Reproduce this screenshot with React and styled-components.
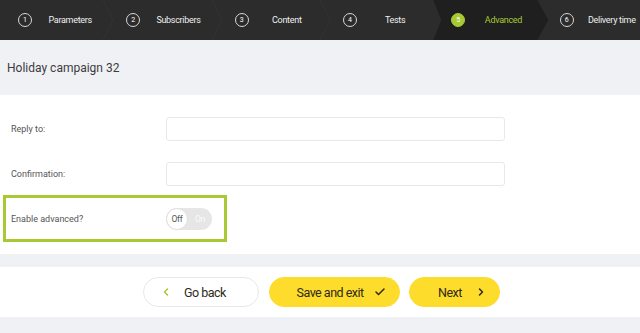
import styled, { createGlobalStyle } from 'styled-components';
import { ChevronLeft, ChevronRight, Check } from 'lucide-react';

const GlobalStyle = createGlobalStyle`
  html, body {
    margin: 0;
    padding: 0;
    background: #f0f1f5;
    font-family: Roboto, "Open Sans", sans-serif;
  }
  * { box-sizing: border-box; }
`;

const green = '#a6c934';
const yellow = '#fddc2c';

const Page = styled.div`
  width: 640px;
  height: 333px;
  overflow: hidden;
  background: #f0f1f5;
`;

const Steps = styled.nav`
  display: flex;
  height: 40px;
  background: #2c2c2c;
  overflow: hidden;
`;

const Step = styled.div`
  position: relative;
  flex: 0 0 108.33px;
  display: flex;
  align-items: center;
  padding-left: 18px;
  font-family: Roboto, sans-serif;
  font-size: 9px;
  letter-spacing: -0.3px;
  color: ${p => (p.$active ? green : '#f0f0f0')};

  &::before {
    content: '';
    position: absolute;
    top: 0;
    bottom: 0;
    left: 0;
    right: -11px;
    background: ${p => (p.$active ? '#1f1f1f' : 'transparent')};
    clip-path: polygon(0 0, 104px 0, 115px 50%, 104px 100%, 0 100%, 8px 50%);
  }
`;

const Sep = styled.svg`
  position: absolute;
  right: -6px;
  top: 0;
`;

const Num = styled.span`
  position: relative;
  width: 14px;
  height: 14px;
  border-radius: 50%;
  border: 1px solid ${p => (p.$active ? green : '#d8d8d8')};
  background: ${p => (p.$active ? green : 'transparent')};
  color: #fff;
  font-size: 7px;
  letter-spacing: 0;
  display: flex;
  align-items: center;
  justify-content: center;
  flex: none;
`;

const StepLabel = styled.span`
  position: relative;
  flex: 1;
  text-align: center;
  white-space: nowrap;
`;

const Header = styled.header`
  height: 55px;
  display: flex;
  align-items: center;
  padding-left: 7px;
  font-size: 12px;
  color: #3c3c3c;
`;

const Form = styled.section`
  background: #fff;
  padding: 22px 0 12px;
  display: flex;
  flex-direction: column;
`;

const Row = styled.div`
  display: flex;
  align-items: center;
  padding-left: 11px;
  margin-bottom: 21px;
`;

const Label = styled.label`
  width: 155px;
  font-size: 9px;
  color: #555;
`;

const Input = styled.input`
  width: 339px;
  height: 24px;
  border: 1px solid #e8e8ec;
  border-radius: 3px;
  background: #fff;
  outline: none;
`;

const Highlight = styled.div`
  display: flex;
  align-items: center;
  width: 224px;
  height: 47px;
  margin: -12px 0 0 3px;
  padding-left: 5px;
  border: 3px solid ${green};
`;

const Toggle = styled.div`
  width: 46px;
  height: 22px;
  border-radius: 11px;
  background: #e6e6e6;
  display: flex;
  align-items: center;
  font-size: 8.5px;
  letter-spacing: -0.3px;
`;

const Knob = styled.span`
  width: 22px;
  height: 22px;
  border-radius: 50%;
  background: #fff;
  border: 1px solid #e0e0e0;
  color: #555;
  display: flex;
  align-items: center;
  justify-content: center;
`;

const OnText = styled.span`
  flex: 1;
  text-align: center;
  color: #fafafa;
`;

const Footer = styled.footer`
  margin-top: 13px;
  height: 50px;
  background: #fff;
  display: flex;
  align-items: center;
  justify-content: center;
  gap: 9.5px;
  padding-left: 3px;
`;

const Button = styled.button`
  width: ${p => p.$w}px;
  height: 30px;
  border-radius: 15px;
  border: 1px solid ${p => (p.$ghost ? '#e8e8e8' : yellow)};
  background: ${p => (p.$ghost ? '#fff' : yellow)};
  color: #2e2a1a;
  font-family: Roboto, sans-serif;
  font-size: 12.5px;
  letter-spacing: -0.5px;
  display: flex;
  align-items: center;
  justify-content: flex-start;
  gap: ${p => p.$gap}px;
  padding: 0 0 0 ${p => p.$pad}px;
  cursor: pointer;
`;

const steps = ['Parameters', 'Subscribers', 'Content', 'Tests', 'Advanced', 'Delivery time'];

export default function App() {
  return (
    <Page>
      <GlobalStyle />
      <Steps>
        {steps.map((s, i) => (
          <Step key={s} $active={i === 4}>
            <Num $active={i === 4}>{i + 1}</Num>
            <StepLabel>{s}</StepLabel>
            {i !== 3 && i !== 4 && (
              <Sep width="12" height="40" viewBox="0 0 12 40">
                <path d="M1 0 L11 20 L1 40" fill="none" stroke="#313131" strokeWidth="1.5" />
              </Sep>
            )}
          </Step>
        ))}
      </Steps>
      <Header>Holiday campaign 32</Header>
      <Form>
        <Row>
          <Label>Reply to:</Label>
          <Input />
        </Row>
        <Row>
          <Label>Confirmation:</Label>
          <Input />
        </Row>
        <Highlight>
          <Label>Enable advanced?</Label>
          <Toggle>
            <Knob>Off</Knob>
            <OnText>On</OnText>
          </Toggle>
        </Highlight>
      </Form>
      <Footer>
        <Button $ghost $w={116} $pad={16} $gap={12}>
          <ChevronLeft size={12} strokeWidth={3} color={green} />
          Go back
        </Button>
        <Button $w={131} $pad={27} $gap={10}>
          Save and exit
          <Check size={12} strokeWidth={3} />
        </Button>
        <Button $w={91} $pad={28} $gap={13}>
          Next
          <ChevronRight size={12} strokeWidth={3} />
        </Button>
      </Footer>
    </Page>
  );
}
